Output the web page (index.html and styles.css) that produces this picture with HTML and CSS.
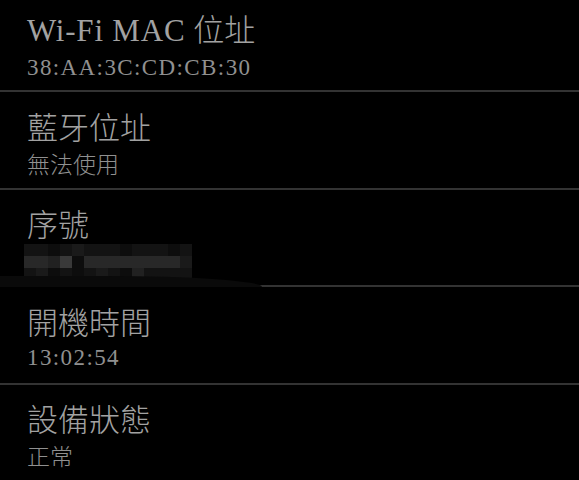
FILE: index.html
```html
<!DOCTYPE html>
<html lang="zh-Hant">
<head>
<meta charset="utf-8">
<link rel="stylesheet" href="styles.css">
</head>
<body>
<div class="list">
  <div class="row">
    <div class="title"><span class="latin-title">Wi-Fi MAC</span> <span class="cjk">位址</span></div>
    <div class="sub latin">38:AA:3C:CD:CB:30</div>
  </div>
  <div class="divider"></div>
  <div class="row">
    <div class="title cjk">藍牙位址</div>
    <div class="sub cjk">無法使用</div>
  </div>
  <div class="divider"></div>
  <div class="row row-masked">
    <div class="title cjk">序號</div>
    <div class="mosaic">
      <i class="m1"></i><i class="m1"></i><i class="m0"></i><i class="m1"></i><i class="m2"></i><i class="m1"></i><i class="m1"></i><i class="m1"></i><i class="m0"></i><i class="m1"></i><i class="m1"></i><i class="m1"></i><i class="m0"></i><i class="m1"></i>
      <i class="m4"></i><i class="m4"></i><i class="m3"></i><i class="m5"></i><i class="m0"></i><i class="m4"></i><i class="m4"></i><i class="m4"></i><i class="m4"></i><i class="m4"></i><i class="m4"></i><i class="m4"></i><i class="m4"></i><i class="m2"></i>
      <i class="m1"></i><i class="m2"></i><i class="m0"></i><i class="m1"></i><i class="m0"></i><i class="m1"></i><i class="m2"></i><i class="m1"></i><i class="m0"></i><i class="m3"></i><i class="m1"></i><i class="m1"></i><i class="m1"></i><i class="m1"></i>
    </div>
  </div>
  <div class="divider divider-faded"></div>
  <div class="row">
    <div class="title cjk">開機時間</div>
    <div class="sub latin">13:02:54</div>
  </div>
  <div class="divider"></div>
  <div class="row">
    <div class="title cjk">設備狀態</div>
    <div class="sub cjk">正常</div>
  </div>
</div>
</body>
</html>
```
FILE: styles.css
```css
html, body {
  margin: 0;
  padding: 0;
  background: #000;
  overflow: hidden;
}
body {
  width: 579px;
  height: 480px;
}
.list {
  display: flex;
  flex-direction: column;
  margin-top: -5.5px;
}
.row {
  height: 95.5px;
  box-sizing: border-box;
  padding: 14.5px 0 0 27px;
  display: flex;
  flex-direction: column;
  position: relative;
}
.title {
  font-family: "Liberation Serif", "Noto Sans CJK TC", serif;
  font-size: 31px;
  line-height: 38px;
  color: #a2a2a2;
  white-space: nowrap;
}
.latin-title {
  letter-spacing: 0.8px;
}
.sub {
  font-family: "Liberation Serif", "Noto Sans CJK TC", serif;
  font-size: 23px;
  line-height: 30px;
  margin-top: 3px;
  color: #909090;
  white-space: nowrap;
}
.latin {
  letter-spacing: 1.4px;
}
.cjk {
  font-family: "Noto Sans CJK TC", serif;
  font-weight: 300;
}
.divider {
  height: 2px;
  background: #333;
}
.divider-faded {
  background: linear-gradient(to right, transparent 0, transparent 100px, #1c1c1c 100px, #1c1c1c 258px, #333 258px);
}
.mosaic {
  margin-left: -3px;
  margin-top: 1.5px;
  width: 168px;
  display: grid;
  grid-template-columns: repeat(14, 12px);
  grid-auto-rows: 12.3px;
}
.mosaic i { display: block; }
.m0 { background: #0d0d0d; }
.m1 { background: #131313; }
.m2 { background: #1a1a1a; }
.m3 { background: #212121; }
.m4 { background: #282828; }
.m5 { background: #393939; }
.row-masked::after {
  content: "";
  position: absolute;
  left: 0;
  top: 86px;
  width: 262px;
  height: 11px;
  background: #0a0a0a;
  border-radius: 0 60% 0 0 / 0 100% 0 0;
}
```
